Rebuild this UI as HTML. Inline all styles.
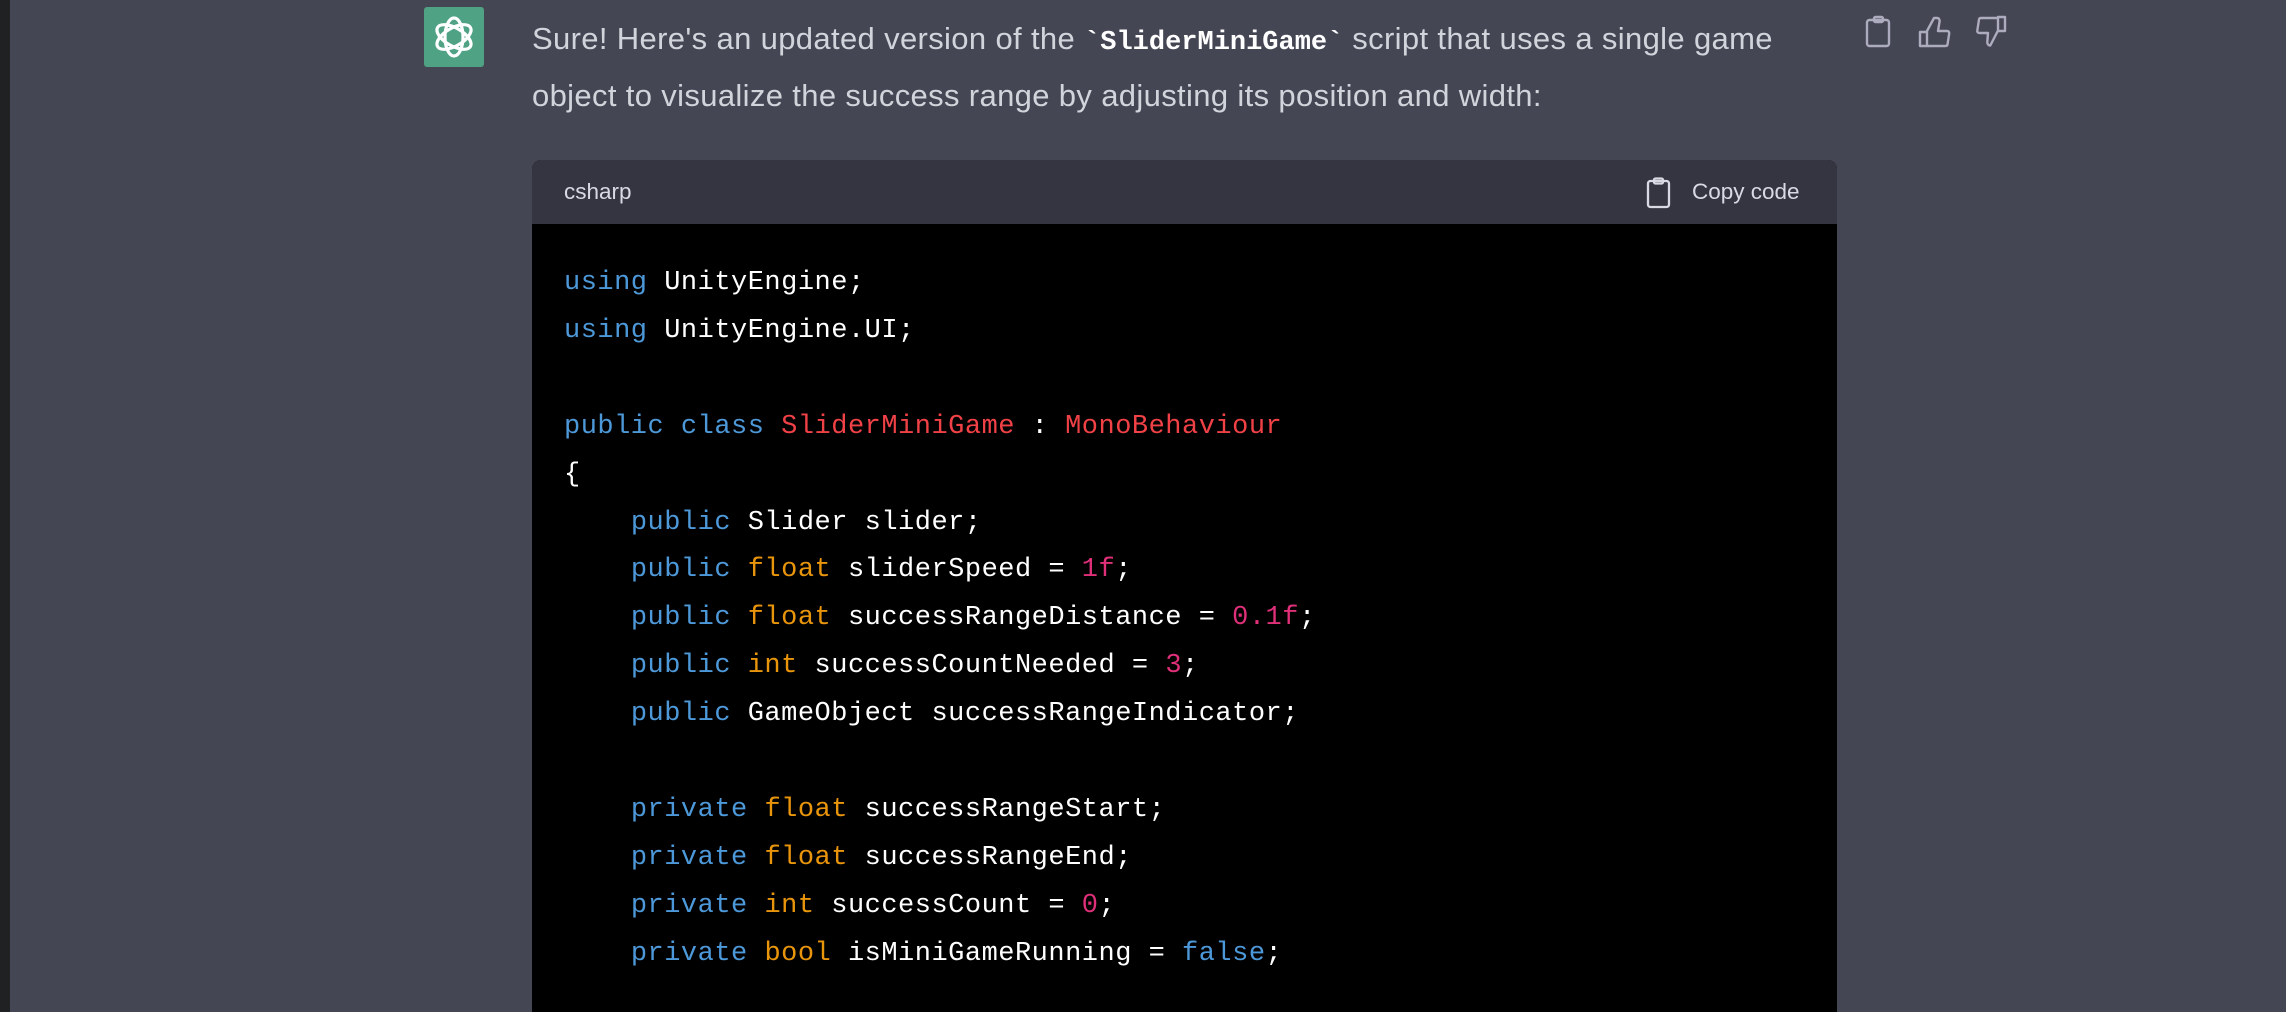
<!DOCTYPE html>
<html><head><meta charset="utf-8"><style>
html,body{margin:0;padding:0;width:2286px;height:1012px;overflow:hidden;background:#444654;}
.stripe{position:absolute;left:0;top:0;width:10px;height:1012px;background:#202123;}
.avatar{position:absolute;left:424px;top:7px;width:60px;height:60px;background:#4fa283;border-radius:3px;}
.msg{position:absolute;left:532px;top:10px;width:1320px;font-family:"Liberation Sans",sans-serif;font-size:31px;line-height:57px;color:#d1d5db;white-space:nowrap;letter-spacing:0.35px;}
.l{display:block;height:57px;}
.msg b{font-family:"Liberation Mono",monospace;color:#fff;font-weight:bold;font-size:27px;letter-spacing:0;line-height:1;}
.icons{position:absolute;top:0;left:1850px;}
.code{position:absolute;left:532px;top:160px;width:1305px;height:852px;border-radius:9px 9px 0 0;overflow:hidden;background:#000;}
.hdr{height:64px;background:#343541;position:relative;font-family:"Liberation Sans",sans-serif;font-size:22.5px;color:#d9d9e3;}
.hdr .lang{position:absolute;left:32px;top:19px;}
.hdr .copy{position:absolute;left:1160px;top:19px;}
pre{margin:0;padding:36px 0 0 32px;font-family:"Liberation Mono",monospace;font-size:27px;letter-spacing:0.5px;line-height:47.9px;color:#fff;}
.k{color:#4d98d8}.t{color:#e9950c}.c{color:#ef4146}.n{color:#df3079}
</style></head><body>
<div class="stripe"></div>
<div class="avatar"><svg width="60" height="60" viewBox="0 0 60 60"><g fill="none" stroke="#fff" stroke-width="3.2"><ellipse cx="30" cy="30" rx="9" ry="19"/><ellipse cx="30" cy="30" rx="9" ry="19" transform="rotate(60 30 30)"/><ellipse cx="30" cy="30" rx="9" ry="19" transform="rotate(120 30 30)"/></g></svg></div>
<div class="msg"><span class="l">Sure! Here's an updated version of the <b>`SliderMiniGame`</b> script that uses a single game</span><span class="l">object to visualize the success range by adjusting its position and width:</span></div>
<div class="icons"><svg width="200" height="70" viewBox="0 0 200 70" fill="none" stroke="#acacbe" stroke-width="2.4" stroke-linejoin="round" stroke-linecap="round">
<rect x="17" y="20" width="22" height="26" rx="2.5"/><rect x="24" y="17" width="9" height="5" rx="1.5"/>
<path d="M70 32h7v14h-7zM77 45V31l7-13h3c2 0 3 2 2.5 4l-1.5 9h9c1.5 0 2.5 1 2.2 2.5l-1.7 11c-.2 1-1 1.5-2 1.5H77z"/>
<path d="M148 17h7v14h-7zM148 18H131c-1 0-1.8.5-2 1.5l-1.7 11c-.3 1.5.7 2.5 2.2 2.5h8.5l-.7 9c-.2 2 1 3.5 3 3.5l7.7-15z"/>
</svg></div>
<div class="code">
<div class="hdr"><span class="lang">csharp</span>
<svg style="position:absolute;left:1113px;top:17px" width="28" height="32" viewBox="0 0 28 32" fill="none" stroke="#d9d9e3" stroke-width="2.3"><rect x="3" y="4" width="21" height="26" rx="2.5"/><rect x="9" y="1.5" width="9" height="5" rx="1.5"/></svg>
<span class="copy">Copy code</span></div>
<pre><span class="k">using</span> UnityEngine;
<span class="k">using</span> UnityEngine.UI;

<span class="k">public</span> <span class="k">class</span> <span class="c">SliderMiniGame</span> : <span class="c">MonoBehaviour</span>
{
    <span class="k">public</span> Slider slider;
    <span class="k">public</span> <span class="t">float</span> sliderSpeed = <span class="n">1f</span>;
    <span class="k">public</span> <span class="t">float</span> successRangeDistance = <span class="n">0.1f</span>;
    <span class="k">public</span> <span class="t">int</span> successCountNeeded = <span class="n">3</span>;
    <span class="k">public</span> GameObject successRangeIndicator;

    <span class="k">private</span> <span class="t">float</span> successRangeStart;
    <span class="k">private</span> <span class="t">float</span> successRangeEnd;
    <span class="k">private</span> <span class="t">int</span> successCount = <span class="n">0</span>;
    <span class="k">private</span> <span class="t">bool</span> isMiniGameRunning = <span class="k">false</span>;
</pre>
</div>
</body></html>
